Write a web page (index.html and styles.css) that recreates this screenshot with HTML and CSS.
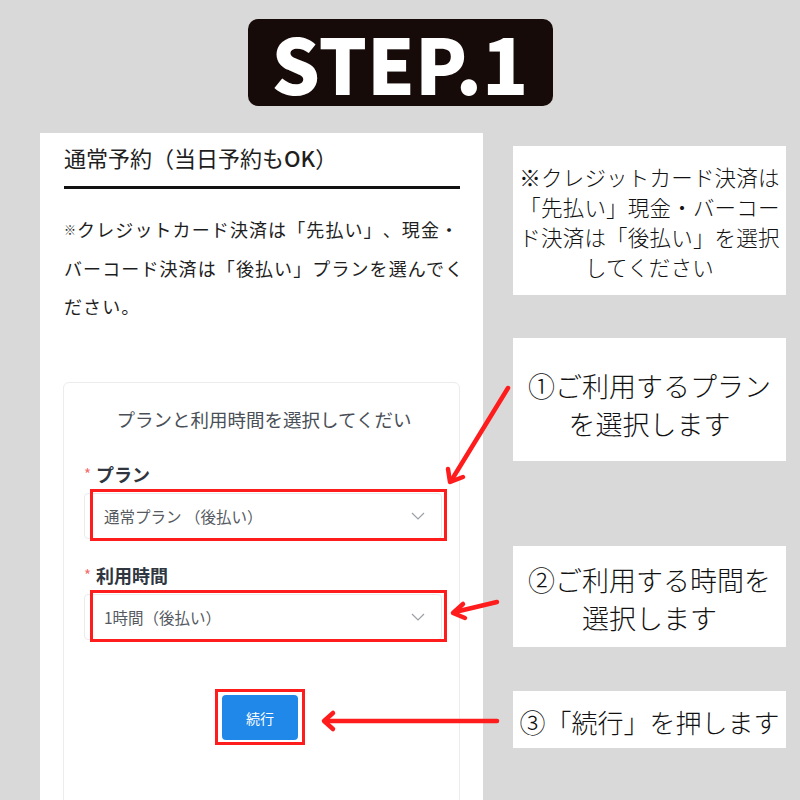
FILE: index.html
```html
<!DOCTYPE html>
<html lang="ja">
<head>
<meta charset="utf-8">
<link rel="stylesheet" href="styles.css">
</head>
<body>
<div class="page">
  <header class="header">
    <div class="step">STEP.1</div>
  </header>
  <main class="main">
    <section class="phone">
      <h1 class="title">通常予約（当日予約も<span class="ok">OK</span>）</h1>
      <hr class="rule">
      <p class="note"><span class="kome">※</span>クレジットカード決済は「先払い」、現金・<br>バーコード決済は「後払い」プランを選んでく<br>ださい。</p>
      <div class="card">
        <div class="card-head">プランと利用時間を選択してくだい</div>
        <div class="label"><span class="star">*</span>プラン</div>
        <div class="field">
          <div class="select">
            <span>通常プラン （後払い）</span>
            <svg class="chev" width="14" height="8" viewBox="0 0 14 8"><polyline points="1,1 7,7 13,1" fill="none" stroke="#9aa0a6" stroke-width="1.2"/></svg>
          </div>
          <div class="mark mark-select"></div>
        </div>
        <div class="label label2"><span class="star">*</span>利用時間</div>
        <div class="field">
          <div class="select">
            <span>1時間（後払い）</span>
            <svg class="chev" width="14" height="8" viewBox="0 0 14 8"><polyline points="1,1 7,7 13,1" fill="none" stroke="#9aa0a6" stroke-width="1.2"/></svg>
          </div>
          <div class="mark mark-select"></div>
        </div>
        <div class="btn-row">
          <div class="btn-wrap">
            <button class="btn">続行</button>
            <div class="mark mark-btn"></div>
          </div>
        </div>
      </div>
    </section>
    <aside class="notes">
      <div class="callout c1">※クレジットカード決済は<br>「先払い」現金・バーコー<br>ド決済は「後払い」を選択<br>してください</div>
      <div class="callout c2">①ご利用するプラン<br>を選択します</div>
      <div class="callout c3">②ご利用する時間を<br>選択します</div>
      <div class="callout c4">③「続行」を押します</div>
    </aside>
  </main>
  <svg class="arrows" width="800" height="800" viewBox="0 0 800 800">
    <g fill="none" stroke="#ff1c1c" stroke-width="4.5" stroke-linecap="round" stroke-linejoin="round">
      <line x1="508" y1="388" x2="451" y2="481"/>
      <polyline points="448,469 450,482 463,477"/>
      <line x1="497" y1="602" x2="455" y2="612"/>
      <polyline points="463,604 453,613 465,618"/>
      <line x1="497" y1="721" x2="325" y2="721"/>
      <polyline points="333,713 324,721 333,729"/>
    </g>
  </svg>
</div>
</body>
</html>
```

FILE: styles.css
```css
* { box-sizing: border-box; }
html, body { margin: 0; padding: 0; }
body {
  width: 800px;
  height: 800px;
  overflow: hidden;
  background: #d9d9d9;
  font-family: "Noto Sans CJK JP", "Noto Sans", sans-serif;
  color: #222;
  text-spacing-trim: space-all;
}
.page { position: relative; width: 800px; height: 800px; }
.header {
  display: flex;
  justify-content: center;
  padding-top: 19px;
}
.step {
  width: 305px;
  height: 87px;
  background: #170b09;
  border-radius: 10px;
  color: #fff;
  font-size: 76px;
  font-weight: 900;
  line-height: 87px;
  text-align: center;
}
.main {
  display: flex;
  padding-left: 40px;
  margin-top: 27px;
  gap: 30px;
}
.phone {
  width: 443px;
  height: 680px;
  background: #fff;
  padding: 9px 23px 0 23px;
}
.title {
  margin: 0 0 0 1px;
  font-size: 22px;
  font-weight: 400;
  line-height: 30px;
  color: #1e1e1e;
}
.ok { font-weight: 500; }
.rule {
  margin: 14px 0 0 1px;
  border: 0;
  height: 3px;
  background: #111;
}
.note {
  margin: 21px 0 0 1px;
  font-size: 18px;
  line-height: 38px;
  color: #1e1e1e;
  letter-spacing: 1.1px;
  white-space: nowrap;
}
.kome { font-size: 12px; vertical-align: 2px; }
.card {
  margin-top: 57px;
  border: 1px solid #ececec;
  border-radius: 6px;
  height: 440px;
  padding: 24px 17px 0 20px;
}
.card-head {
  text-align: center;
  font-size: 18.5px;
  line-height: 24px;
  color: #4a4f57;
  padding-left: 2px;
}
.label {
  margin-top: 31px;
  font-size: 18px;
  font-weight: 700;
  line-height: 24px;
  color: #2f3640;
}
.label2 { margin-top: 24px; }
.star {
  color: #f56c6c;
  font-weight: 400;
  font-size: 15px;
  margin-right: 5px;
  vertical-align: 2px;
}
.field { position: relative; margin-top: 7px; }
.select {
  height: 46px;
  border: 1px solid #ebebeb;
  border-radius: 4px;
  display: flex;
  align-items: center;
  justify-content: space-between;
  padding: 0 16px 0 19px;
  font-size: 15.5px;
  color: #555a61;
}
.chev { display: block; }
.mark {
  position: absolute;
  border: 3px solid #ff1c1c;
  pointer-events: none;
}
.mark-select { left: 6px; right: -5px; top: -4px; bottom: -2px; }
.btn-row {
  display: flex;
  justify-content: center;
  margin-top: 55px;
  padding-right: 6px;
}
.btn-wrap { position: relative; }
.btn {
  display: block;
  width: 76px;
  height: 45px;
  border: 0;
  border-radius: 4px;
  background: #1f88e8;
  color: #fff;
  font-family: inherit;
  font-size: 14px;
}
.mark-btn { left: -7px; right: -7px; top: -6px; bottom: -5px; }
.notes {
  width: 273px;
  display: flex;
  flex-direction: column;
  padding-top: 13px;
}
.callout {
  background: #fff;
  display: flex;
  align-items: center;
  justify-content: center;
  text-align: center;
  color: #111;
  font-weight: 300;
}
.c1 { height: 149px; font-size: 21.5px; line-height: 30px; letter-spacing: 0.2px; padding-top: 2px; }
.c2 { height: 123px; margin-top: 43px; font-size: 27px; line-height: 38px; padding-top: 10px; }
.c3 { height: 101px; margin-top: 85px; font-size: 27px; line-height: 38px; padding-top: 4px; }
.c4 { height: 57px; margin-top: 44px; font-size: 26px; line-height: 36px; padding-top: 4px; white-space: nowrap; }
.arrows {
  position: absolute;
  top: 0;
  left: 0;
  pointer-events: none;
}
```
